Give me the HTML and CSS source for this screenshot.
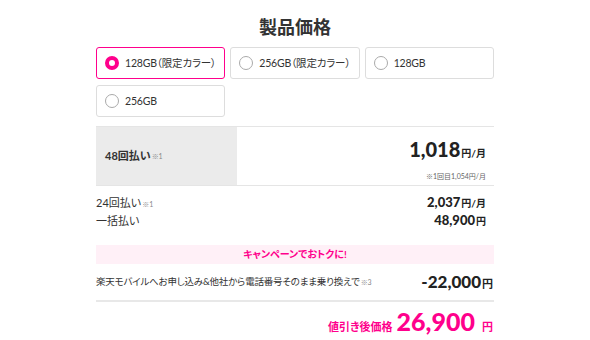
FILE: index.html
```html
<!DOCTYPE html>
<html lang="ja">
<head>
    <meta charset="UTF-8">
    <title>製品価格</title>
    <link rel="stylesheet" href="styles.css">
</head>
<body>
    <div class="price-section">
        <h2 class="title">製品価格</h2>

        <div class="options">
            <label class="option selected"><span class="radio"></span>128GB（限定カラー）</label>
            <label class="option"><span class="radio"></span>256GB（限定カラー）</label>
            <label class="option"><span class="radio"></span>128GB</label>
            <label class="option"><span class="radio"></span>256GB</label>
        </div>

        <div class="main-plan">
            <div class="plan-label">48回払い<span class="note">※1</span></div>
            <div class="plan-value">
                <div class="big">1,018<span class="unit">円/月</span></div>
                <div class="sub">※1回目1,054円/月</div>
            </div>
        </div>

        <div class="row first">
            <div>24回払い<span class="note">※1</span></div>
            <div class="val">2,037<span class="unit">円/月</span></div>
        </div>
        <div class="row">
            <div>一括払い</div>
            <div class="val">48,900<span class="unit">円</span></div>
        </div>

        <div class="campaign">キャンペーンでおトクに!</div>

        <div class="discount">
            <div class="discount-text">楽天モバイルへお申し込み&amp;他社から電話番号そのまま乗り換えで<span class="note">※3</span></div>
            <div class="minus">-22,000<span class="unit">円</span></div>
        </div>

        <div class="total">
            <span class="total-label">値引き後価格</span>
            <span class="total-num">26,900</span>
            <span class="total-unit">円</span>
        </div>
    </div>
</body>
</html>
```

FILE: styles.css
```css
body {
    margin: 0;
    background: #fff;
    color: #333;
    font-family: Lato, "Noto Sans CJK JP", sans-serif;
    font-feature-settings: "palt";
    line-height: 1.2;
}

.price-section {
    width: 398px;
    margin: 0 auto;
    padding-top: 15px;
}

.title {
    margin: 0 0 8px;
    text-align: center;
    font-size: 18px;
    line-height: 24px;
    font-weight: bold;
}

.options {
    display: grid;
    grid-template-columns: repeat(3, 1fr);
    column-gap: 5px;
    row-gap: 6px;
}

.option {
    display: flex;
    align-items: center;
    gap: 6px;
    height: 32px;
    box-sizing: border-box;
    padding-left: 8px;
    border: 1px solid #ddd;
    border-radius: 3px;
    font-size: 10.5px;
    letter-spacing: -0.2px;
    color: #333;
}

.option.selected {
    border-color: #ff008c;
}

.radio {
    width: 14px;
    height: 14px;
    border: 1px solid #aaa;
    border-radius: 50%;
    box-sizing: border-box;
}

.selected .radio {
    border: 4px solid #ff008c;
}

.main-plan {
    display: flex;
    margin-top: 9px;
    border-top: 1px solid #e5e5e5;
    border-bottom: 1px solid #e5e5e5;
    height: 58px;
}

.plan-label {
    width: 141px;
    background: #ebebeb;
    display: flex;
    align-items: center;
    padding-left: 9px;
    box-sizing: border-box;
    font-size: 11px;
    font-weight: bold;
}

.note {
    font-size: 7px;
    font-weight: normal;
    color: #888;
    margin-left: 1px;
}

.plan-value {
    flex: 1;
    text-align: right;
    padding-right: 8px;
    padding-top: 10px;
}

.big {
    font-size: 20px;
    font-weight: 900;
    line-height: 24px;
    color: #222;
}

.unit {
    font-size: 10px;
    font-weight: bold;
    margin-left: 1px;
}

.sub {
    font-size: 7px;
    line-height: 10px;
    color: #666;
    margin-top: 6px;
}

.row {
    display: flex;
    justify-content: space-between;
    align-items: center;
    height: 18px;
    font-size: 11px;
    padding-right: 8px;
}

.row.first {
    margin-top: 8px;
}

.val {
    font-size: 13px;
    font-weight: 900;
    color: #222;
}

.campaign {
    margin-top: 15px;
    height: 19px;
    line-height: 19px;
    background: #fff0f7;
    color: #ff008c;
    text-align: center;
    font-size: 10px;
    font-weight: bold;
}

.discount {
    display: flex;
    justify-content: space-between;
    align-items: center;
    height: 36px;
    border-bottom: 2px solid #e8e8e8;
    font-size: 9.5px;
    letter-spacing: -0.2px;
    padding-right: 1px;
}

.minus {
    font-size: 17px;
    font-weight: 900;
    letter-spacing: 0;
    color: #222;
}

.minus .unit {
    font-size: 11px;
}

.total {
    display: flex;
    justify-content: flex-end;
    align-items: baseline;
    gap: 4px;
    color: #ff008c;
    font-weight: bold;
    padding-top: 4px;
    padding-right: 1px;
}

.total-label {
    font-size: 11px;
}

.total-num {
    font-size: 25px;
    font-weight: 900;
    line-height: 30px;
}

.total-unit {
    font-size: 11px;
    margin-left: 3px;
}
```
